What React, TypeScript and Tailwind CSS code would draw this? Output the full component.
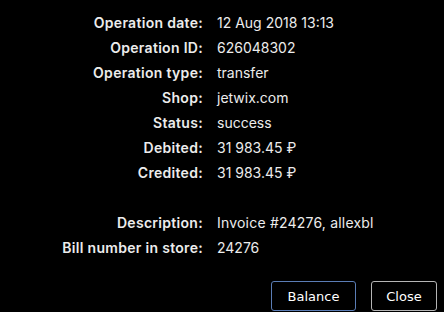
import React from "react";

const rows: [string, string][] = [
  ["Operation date:", "12 Aug 2018 13:13"],
  ["Operation ID:", "626048302"],
  ["Operation type:", "transfer"],
  ["Shop:", "jetwix.com"],
  ["Status:", "success"],
  ["Debited:", "31 983.45 ₽"],
  ["Credited:", "31 983.45 ₽"],
  ["", ""],
  ["Description:", "Invoice #24276, allexbl"],
  ["Bill number in store:", "24276"],
];

export default function App() {
  return (
    <div className="w-[444px] h-[312px] bg-black text-[#ececec] flex flex-col overflow-hidden">
      <div className="grid grid-cols-[203px_1fr] gap-x-[14px] pt-[10px] text-[14px] leading-[25px] font-['Inter',sans-serif]">
        {rows.map(([l, v], i) => (
          <React.Fragment key={i}>
            <div className="text-right font-semibold h-[25px] tracking-[0.3px]">{l}</div>
            <div className={i === 8 ? "h-[25px] tracking-[0.2px]" : "h-[25px]"}>{v}</div>
          </React.Fragment>
        ))}
      </div>
      <div className="flex justify-end gap-[15px] pr-[7px] mt-[21px] font-['DejaVu_Sans',sans-serif] text-[13px]">
        <button className="w-[85px] h-[30px] pt-[1px] rounded-[3px] border border-[#5b7db5] text-white bg-black">
          Balance
        </button>
        <button className="w-[66px] h-[30px] pt-[1px] rounded-[3px] border border-[#b5b5b5] text-white bg-black">
          Close
        </button>
      </div>
    </div>
  );
}
